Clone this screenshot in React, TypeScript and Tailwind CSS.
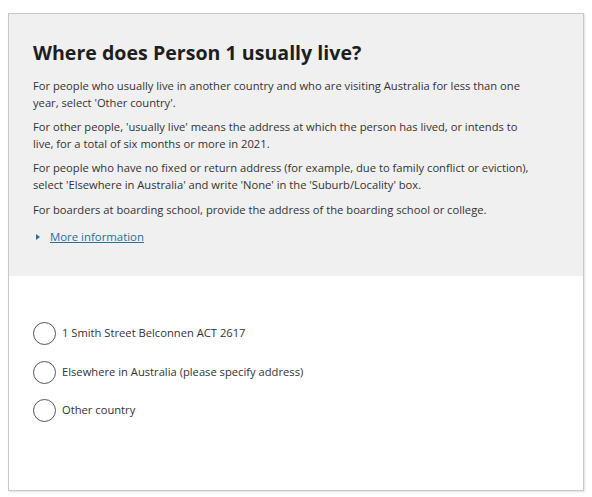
import React from 'react';

const options = [
  '1 Smith Street Belconnen ACT 2617',
  'Elsewhere in Australia (please specify address)',
  'Other country',
];

export default function App() {
  return (
    <div className="w-[592px] h-[497px] bg-white pt-[13px] pl-2 font-['Open_Sans',sans-serif] text-[#333]">
      <div className="w-[576px] h-[478px] border border-[#c8c8c8] shadow-[1px_1px_2px_rgba(0,0,0,0.12)] flex flex-col">
        {/* Question header */}
        <div className="bg-[#f0f0f0] h-[262px] pl-6 pr-6 pt-[26px]">
          <h1 className="text-[19.6px] leading-[26px] font-bold text-[#1e1e1e] mb-[12px]">Where does Person 1 usually live?</h1>
          <div className="flex flex-col gap-[8px] text-[11.2px] leading-[16.6px] w-[501px]">
            <p>For people who usually live in another country and who are visiting Australia for less than one year, select 'Other country'.</p>
            <p>For other people, 'usually live' means the address at which the person has lived, or intends to live, for a total of six months or more in 2021.</p>
            <p>For people who have no fixed or return address (for example, due to family conflict or eviction), select 'Elsewhere in Australia' and write 'None' in the 'Suburb/Locality' box.</p>
            <p>For boarders at boarding school, provide the address of the boarding school or college.</p>
          </div>
          <div className="flex items-center gap-[10px] mt-[10px] pl-[3px] text-[11.4px] leading-[18px]">
            <svg width="4" height="6" viewBox="0 0 4 6"><path d="M0 0 L4 3 L0 6 Z" fill="#2a6f97" /></svg>
            <a className="text-[#2a6f97] underline">More information</a>
          </div>
        </div>
        {/* Options */}
        <div className="flex flex-col gap-[15.5px] pl-6 pt-[46px]">
          {options.map(o => (
            <label key={o} className="flex items-center gap-[6px] text-[11.2px]">
              <span className="w-[23px] h-[23px] rounded-full border-[1.5px] border-[#555] bg-white" />
              <span>{o}</span>
            </label>
          ))}
        </div>
      </div>
    </div>
  );
}
